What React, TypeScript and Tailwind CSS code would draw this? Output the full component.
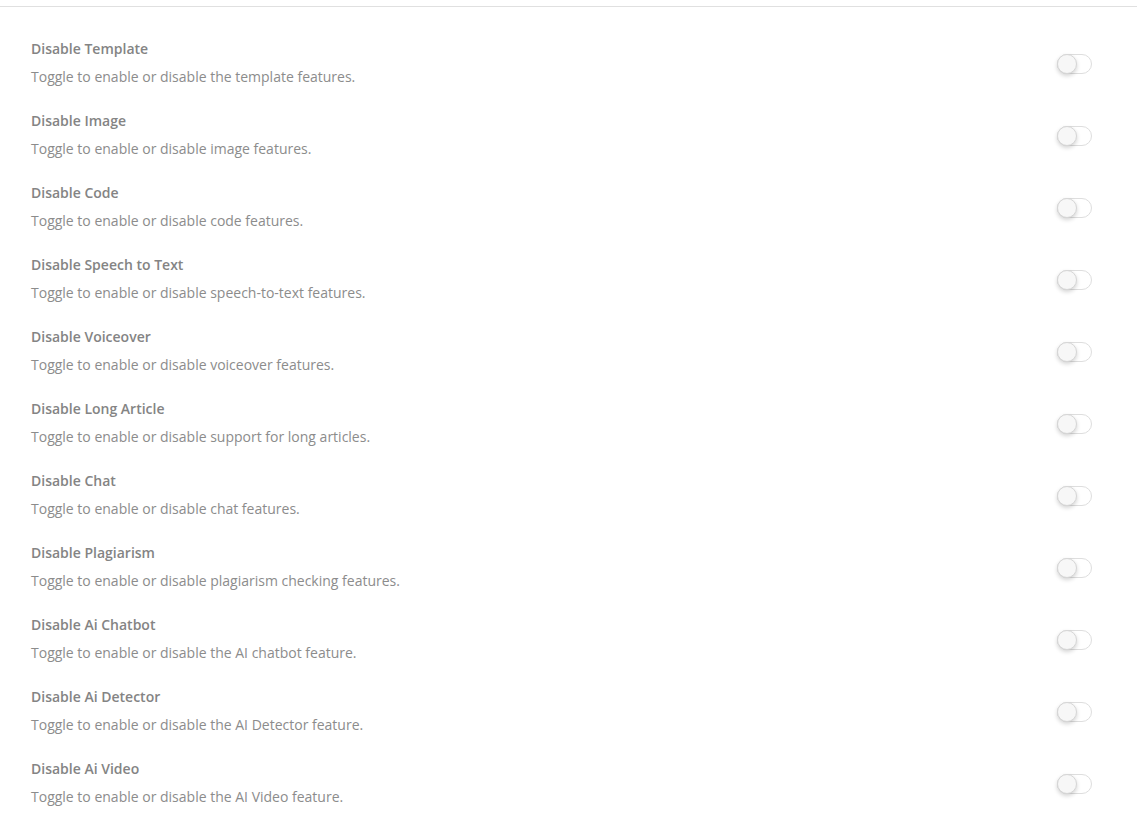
import { useState } from "react";

const items = [
  { title: "Disable Template", desc: "Toggle to enable or disable the template features." },
  { title: "Disable Image", desc: "Toggle to enable or disable image features." },
  { title: "Disable Code", desc: "Toggle to enable or disable code features." },
  { title: "Disable Speech to Text", desc: "Toggle to enable or disable speech-to-text features." },
  { title: "Disable Voiceover", desc: "Toggle to enable or disable voiceover features." },
  { title: "Disable Long Article", desc: "Toggle to enable or disable support for long articles." },
  { title: "Disable Chat", desc: "Toggle to enable or disable chat features." },
  { title: "Disable Plagiarism", desc: "Toggle to enable or disable plagiarism checking features." },
  { title: "Disable Ai Chatbot", desc: "Toggle to enable or disable the AI chatbot feature." },
  { title: "Disable Ai Detector", desc: "Toggle to enable or disable the AI Detector feature." },
  { title: "Disable Ai Video", desc: "Toggle to enable or disable the AI Video feature." },
];

const Toggle = ({ on, onClick }: { on: boolean; onClick: () => void }) => (
  <button
    type="button"
    onClick={onClick}
    className={`relative mt-[2px] h-[20px] w-[35px] rounded-full border ${on ? "border-[#5b8def] bg-[#5b8def]" : "border-[#dedede] bg-white"}`}
  >
    <span
      className={`absolute top-[-1px] h-[20px] w-[20px] rounded-full border border-[#d6d6d6] bg-[#f7f7f7] shadow-[0_2px_4px_rgba(0,0,0,0.18)] ${on ? "left-[14px]" : "left-[-1px]"}`}
    />
  </button>
);

export default function App() {
  const [state, setState] = useState<boolean[]>(items.map(() => false));

  return (
    <div className="min-h-screen bg-white pt-[6px] font-['Open_Sans',sans-serif]">
      <div className="w-[1137px] border-t border-[#e0e0e0] pt-[20px]">
        {items.map((item, i) => (
          <div key={item.title} className="flex items-center justify-between py-3 pl-[31px] pr-[45px]">
            <div className="flex flex-col gap-2">
              <div className="text-[14px] leading-5 font-semibold text-[#848484]">{item.title}</div>
              <div className="text-[14px] leading-5 text-[#8c8c8c]">{item.desc}</div>
            </div>
            <Toggle
              on={state[i]}
              onClick={() => setState((s) => s.map((v, j) => (j === i ? !v : v)))}
            />
          </div>
        ))}
      </div>
    </div>
  );
}
